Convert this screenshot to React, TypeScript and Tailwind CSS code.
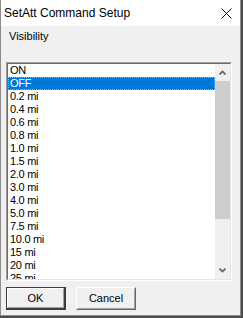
const ITEMS = [
  'ON',
  'OFF',
  '0.2 mi',
  '0.4 mi',
  '0.6 mi',
  '0.8 mi',
  '1.0 mi',
  '1.5 mi',
  '2.0 mi',
  '3.0 mi',
  '4.0 mi',
  '5.0 mi',
  '7.5 mi',
  '10.0 mi',
  '15 mi',
  '20 mi',
  '25 mi',
]

const SELECTED = 1

const sysFont = { fontFamily: '"Liberation Sans", Arial, sans-serif' }

const Chevron = ({ up }: { up?: boolean }) => (
  <svg width="7" height="5" viewBox="0 0 7 5" className="block">
    <path
      d={up ? 'M0.5 4.5 L3.5 1.5 L6.5 4.5' : 'M0.5 0.5 L3.5 3.5 L6.5 0.5'}
      fill="none"
      stroke="#606060"
      strokeWidth="1.6"
    />
  </svg>
)

const Button = ({ label, isDefault }: { label: string; isDefault?: boolean }) => (
  <div
    className={
      isDefault
        ? 'w-[60px] h-[23px] border border-[#3c3c3c] border-r-2 border-b-2'
        : 'w-[60px] h-[23px] border border-t-white border-l-white border-r-[#696969] border-b-[#696969]'
    }
  >
    <div
      className={
        isDefault
          ? 'h-full flex items-center justify-center border border-t-white border-l-white border-r-[#a0a0a0] border-b-[#a0a0a0] bg-[#f0f0f0] text-[11px] text-black'
          : 'h-full flex items-center justify-center border border-t-[#f0f0f0] border-l-[#f0f0f0] border-r-[#a0a0a0] border-b-[#a0a0a0] bg-[#f0f0f0] text-[11px] text-black'
      }
    >
      {label}
    </div>
  </div>
)

export default function App() {
  return (
    <div className="w-[243px] h-[318px] bg-[#4b4b4b] overflow-hidden" style={sysFont}>
      <div className="w-[241px] h-[316px] flex flex-col border-x border-b border-[#8c8c8c] bg-[#f0f0f0]">
        {/* Title bar */}
        <div className="h-[26px] bg-white flex items-center justify-between pl-[3px] pr-[8px]">
          <span className="text-[12px] text-black leading-none pb-[1px]">SetAtt Command Setup</span>
          <svg width="11" height="11" viewBox="0 0 11 11" className="block">
            <path d="M0.5 0.5 L10.5 10.5 M10.5 0.5 L0.5 10.5" stroke="#111" strokeWidth="1" fill="none" />
          </svg>
        </div>

        {/* Client */}
        <div className="flex-1 flex flex-col pl-[5px] pt-[4px]">
          <div className="pl-[3px] text-[11px] leading-[13px] text-black">Visibility</div>

          <div className="mt-[19px] w-[226px] h-[219px] border border-t-[#a0a0a0] border-l-[#a0a0a0] border-r-white border-b-white">
            <div className="h-full flex border border-t-[#696969] border-l-[#696969] border-r-[#e3e3e3] border-b-[#e3e3e3]">
              <ul className="flex-1 bg-white overflow-hidden">
                {ITEMS.map((item, i) => (
                  <li
                    key={item}
                    className={
                      i === SELECTED
                        ? 'h-[13px] pl-[1px] text-[11px] leading-[11px] tracking-[-0.3px] bg-[#0078d7] text-white border border-dotted border-[#f4a23c]'
                        : 'h-[13px] pl-[2px] pt-[1px] text-[11px] leading-[11px] tracking-[-0.3px] text-black'
                    }
                  >
                    {item}
                  </li>
                ))}
              </ul>

              {/* Scrollbar */}
              <div className="w-[15px] flex flex-col bg-[#f0f0f0]">
                <div className="h-[17px] flex items-center justify-center">
                  <Chevron up />
                </div>
                <div className="h-[138px] bg-[#cdcdcd]" />
                <div className="flex-1" />
                <div className="h-[17px] flex items-center justify-center">
                  <Chevron />
                </div>
              </div>
            </div>
          </div>

          <div className="mt-[6px] flex gap-[10px]">
            <Button label="OK" isDefault />
            <Button label="Cancel" />
          </div>
        </div>
      </div>
    </div>
  )
}
